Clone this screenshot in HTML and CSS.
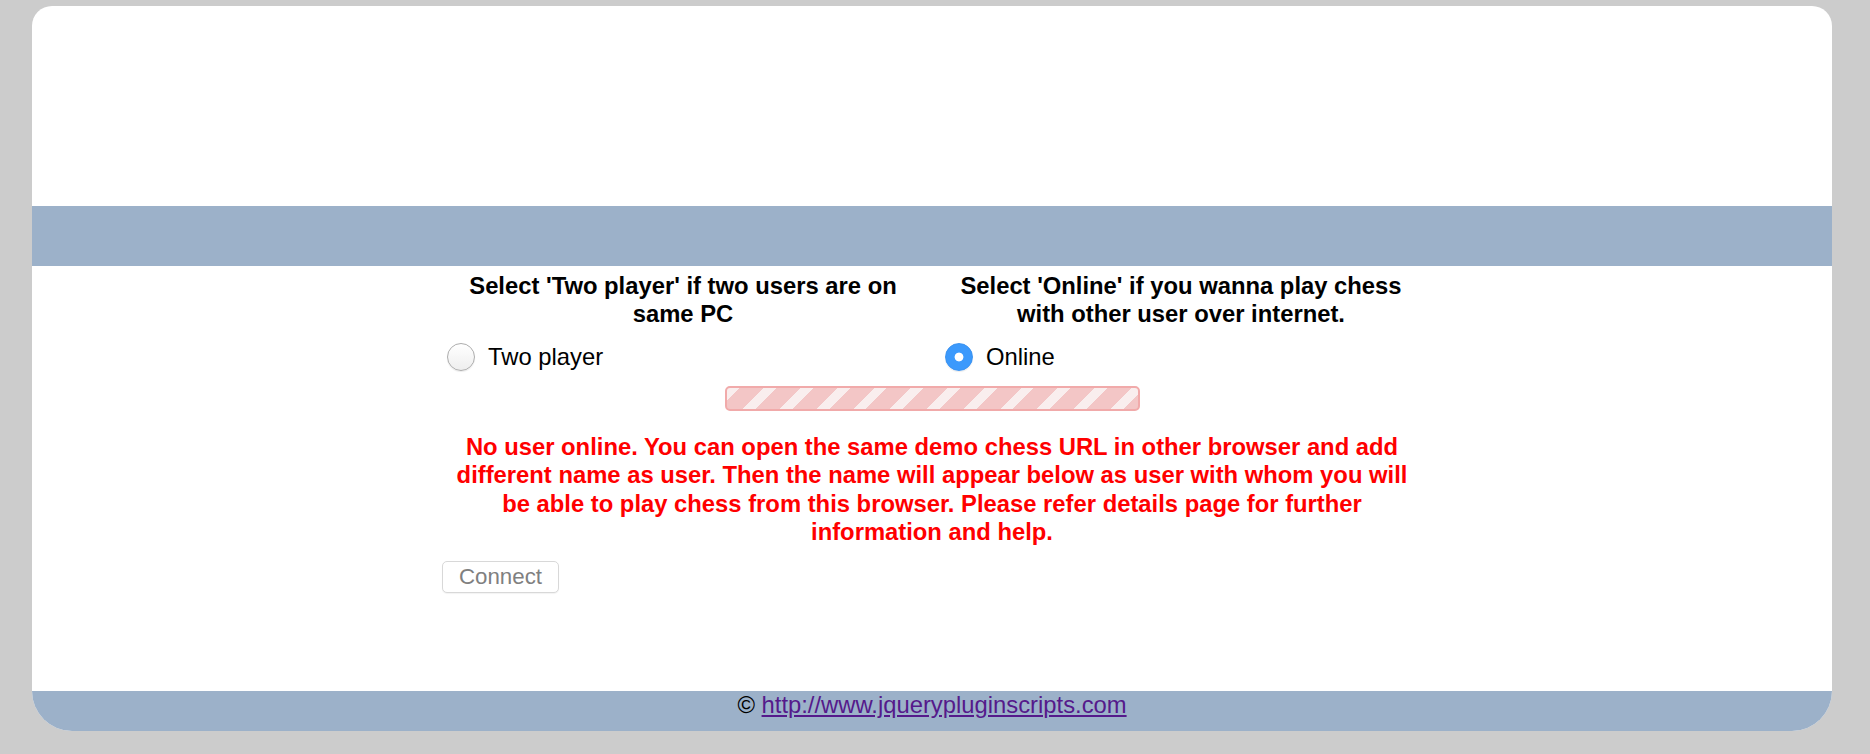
FILE: index.html
```html
<!DOCTYPE html>
<html lang="en">
<head>
<meta charset="utf-8">
<title>Chess</title>
<link rel="stylesheet" href="styles.css">
</head>
<body>
<div class="page">
  <div class="board">
    <div class="top-space"></div>
    <div class="bar"></div>
    <main class="content">
      <div class="modes">
        <div class="mode">
          <h3 class="mode-title">Select 'Two player' if two users are on same PC</h3>
          <label class="option"><input type="radio" name="mode" class="radio"> <span>Two player</span></label>
        </div>
        <div class="mode">
          <h3 class="mode-title">Select 'Online' if you wanna play chess with other user over internet.</h3>
          <label class="option"><input type="radio" name="mode" class="radio" checked> <span>Online</span></label>
        </div>
      </div>
      <div class="progress"></div>
      <p class="status">No user online. You can open the same demo chess URL in other browser and add different name as user. Then the name will appear below as user with whom you will be able to play chess from this browser. Please refer details page for further information and help.</p>
      <div class="actions">
        <button class="connect" disabled>Connect</button>
      </div>
    </main>
    <footer class="footer">© <a href="#" class="link">http://www.jquerypluginscripts.com</a></footer>
  </div>
</div>
</body>
</html>
```
FILE: styles.css
```css
html, body {
  margin: 0;
  padding: 0;
  background: #cccccc;
}
body {
  font-family: "Liberation Sans", Arial, Helvetica, sans-serif;
  font-size: 23.8px;
  color: #000;
}
.page {
  padding: 6px 38px 23px 32px;
}
.board {
  width: 1800px;
  height: 725px;
  background: #ffffff;
  border-radius: 20px 20px 40px 40px;
  overflow: hidden;
  display: flex;
  flex-direction: column;
}
.top-space {
  height: 200px;
}
.bar {
  height: 60px;
  background: #9cb1c9;
}
.content {
  flex: 1;
  display: flex;
  flex-direction: column;
  align-items: center;
  padding-top: 5.5px;
}
.modes {
  width: 996px;
  display: grid;
  grid-template-columns: 498px 498px;
}
.mode-title {
  margin: 0;
  font-size: 23.8px;
  line-height: 28.6px;
  font-weight: bold;
  text-align: center;
  padding: 0 14px;
}
.option {
  display: flex;
  align-items: center;
  margin-top: 14px;
  padding-left: 13px;
  line-height: 28.5px;
  gap: 13px;
}
.radio {
  appearance: none;
  -webkit-appearance: none;
  margin: 0;
  width: 28px;
  height: 28px;
  border-radius: 50%;
  box-sizing: border-box;
  border: 1px solid #adadad;
  background: linear-gradient(#ffffff, #eeeeee);
  box-shadow: 0 1px 1px rgba(0,0,0,0.08);
}
.radio:checked {
  border: 1px solid #3a92f0;
  background: radial-gradient(circle, #ffffff 0 4px, #3b99fc 4.8px);
}
.option span {
  white-space: nowrap;
}
.progress {
  margin-top: 15px;
  width: 415px;
  height: 25px;
  box-sizing: border-box;
  border: 2px solid #f1aaaa;
  border-radius: 5px;
  background: repeating-linear-gradient(135deg, #f9eeee 0 9px, #f3c6c6 9px 26px);
}
.status {
  width: 966px;
  margin: 21.5px 0 0;
  color: #ff0000;
  font-weight: bold;
  text-align: center;
  line-height: 28.5px;
}
.actions {
  width: 996px;
  margin-top: 14.5px;
}
.connect {
  margin-left: 8px;
  width: 117px;
  height: 32px;
  padding: 0;
  border: 1px solid #d8d8d8;
  border-radius: 5px;
  background: #ffffff;
  box-shadow: 0 1px 1px rgba(0,0,0,0.05);
  color: #808080;
  font-family: "Liberation Sans", Arial, Helvetica, sans-serif;
  font-size: 22.3px;
}
.footer {
  height: 40px;
  background: #9cb1c9;
  text-align: center;
  line-height: normal;
}
.link {
  color: #551a8b;
  text-decoration: underline;
}
```
